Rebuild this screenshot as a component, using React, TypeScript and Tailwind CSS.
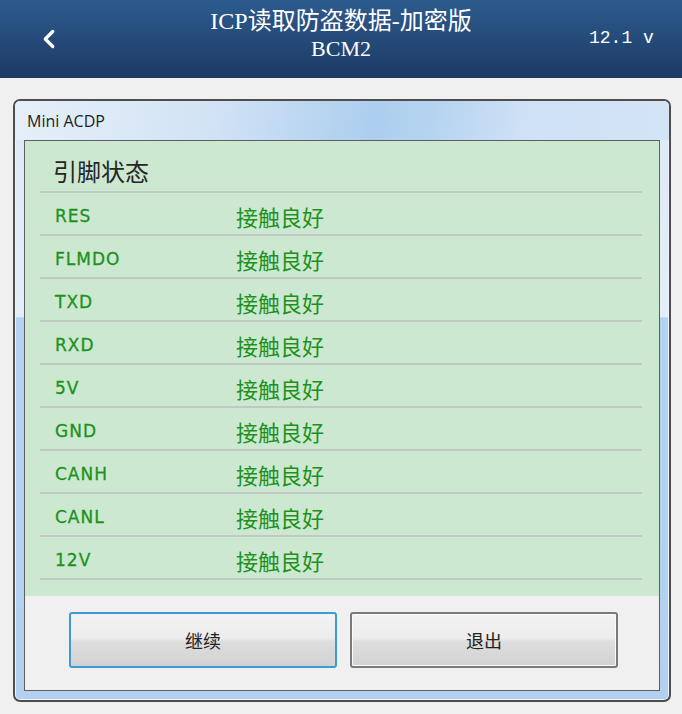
import { ChevronLeft } from 'lucide-react'

const pins = ['RES', 'FLMDO', 'TXD', 'RXD', '5V', 'GND', 'CANH', 'CANL', '12V']

function WinButton({ label, focused }: { label: string; focused?: boolean }) {
  return (
    <button
      type="button"
      className={
        focused
          ? 'h-[56px] w-[268px] rounded-[3px] border-2 border-[#3c9ad6] bg-[linear-gradient(to_bottom,#f3f3f3_0%,#ececec_48%,#dedede_52%,#d2d2d2_100%)] text-[18px] text-[#222] [font-family:"Noto_Sans_CJK_SC",sans-serif]'
          : 'h-[56px] w-[268px] rounded-[3px] border-2 border-[#7a7a7a] bg-[linear-gradient(to_bottom,#f3f3f3_0%,#ececec_48%,#dedede_52%,#d2d2d2_100%)] text-[18px] text-[#222] shadow-[inset_0_0_0_1px_#fafafa] [font-family:"Noto_Sans_CJK_SC",sans-serif]'
      }
    >
      {label}
    </button>
  )
}

export default function App() {
  return (
    <div className="flex h-[714px] w-[682px] flex-col bg-[#f0f0f0]">
      <header className="relative flex h-[78px] shrink-0 items-start justify-center bg-[linear-gradient(to_bottom,#2d5b8e,#1c3a64)] pt-[8px] text-white">
        <ChevronLeft className="absolute left-[34px] top-[24px] h-[30px] w-[30px]" strokeWidth={2.6} aria-hidden />
        <div className="flex flex-col items-center leading-[27px] [font-family:'Liberation_Serif','Noto_Sans_CJK_SC',serif]">
          <span className="text-[24px]">ICP读取防盗数据-加密版</span>
          <span className="text-[22px]">BCM2</span>
        </div>
        <span className="absolute left-[589px] top-[25px] text-[18px] [font-family:'Liberation_Mono',monospace]">
          12.1 v
        </span>
      </header>

      <div className="flex flex-1 flex-col pb-[12px] pl-[13px] pr-[11px] pt-[21px]">
        <div className="flex flex-1 flex-col rounded-[7px] border-2 border-[#4e4e4e] bg-[linear-gradient(to_bottom,#dde9f6_0%,#e4eef9_36%,#b4d2f1_36.2%,#b2d0f0_100%)] px-[9px] pb-[9px] shadow-[inset_0_0_0_1px_#eef5fc]">
          <div className="-mx-[9px] flex h-[39px] items-center rounded-t-[5px] bg-[linear-gradient(100deg,#e6eff9_0%,#d2e3f5_30%,#acceef_55%,#b6d4f1_64%,#cfe1f5_78%,#d3e4f6_100%)] px-[12px] text-[16px] text-[#1e1e1e] [font-family:'Open_Sans',sans-serif]">
            Mini ACDP
          </div>

          <div className="flex flex-1 flex-col border border-[#5e5e5e] bg-[#f0f0f0]">
            <div className="flex h-[455px] flex-col bg-[#cde8d1] pb-[16px] pl-[15px] pr-[17px]">
              <div className="flex h-[52px] items-center border-b-2 border-[#c2c8c2] pl-[13px] pt-[10px] text-[24px] text-[#262626] [font-family:'Noto_Sans_CJK_SC',sans-serif]">
                引脚状态
              </div>
              {pins.map((p) => (
                <div
                  key={p}
                  className="flex h-[43px] items-center border-b-2 border-[#c2c8c2] pl-[15px] pt-[6px] text-[#1c921c]"
                >
                  <span className="w-[181px] text-[17px] tracking-[1px] [font-family:'DejaVu_Sans',sans-serif] [-webkit-text-stroke:0.3px_#1c921c]">
                    {p}
                  </span>
                  <span className="text-[22px] [font-family:'Noto_Sans_CJK_SC',sans-serif]">接触良好</span>
                </div>
              ))}
            </div>

            <div className="flex flex-1 gap-[13px] pl-[44px] pt-[16px]">
              <WinButton label="继续" focused />
              <WinButton label="退出" />
            </div>
          </div>
        </div>
      </div>
    </div>
  )
}
